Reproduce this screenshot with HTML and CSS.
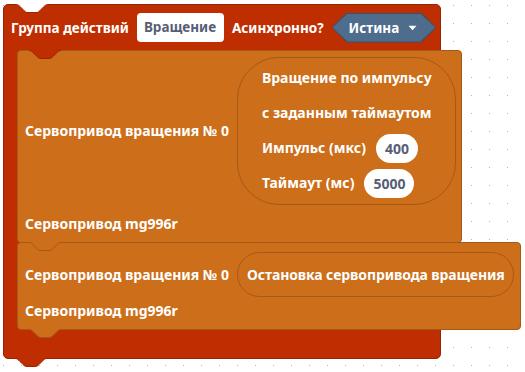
FILE: index.html
```html
<!DOCTYPE html>
<html lang="ru">
<head>
  <meta charset="UTF-8" />
  <title>Группа действий</title>
  <link rel="stylesheet" href="styles.css">
</head>
<body>
  <div class="workspace">
    <div class="c-block">
      <svg class="tab tab-cut" viewBox="0 0 32 10"><rect class="fill" width="32" height="1"/><path class="fill" d="M0 0.5 c2 0 3 1 4 2 l4 4 c1 1 2 2 4 2 h8 c2 0 3 -1 4 -2 l4 -4 c1 -1 2 -2 4 -2 Z"/><path class="edge" d="M0 0.5 c2 0 3 1 4 2 l4 4 c1 1 2 2 4 2 h8 c2 0 3 -1 4 -2 l4 -4 c1 -1 2 -2 4 -2"/></svg>

      <div class="c-head">
        <span class="label">Группа действий</span>
        <span class="field">Вращение</span>
        <span class="label">Асинхронно?</span>
        <span class="dropdown">Истина <svg class="arrow" viewBox="0 0 8 5"><path d="M0.5 0.5 H7.5 L4 4.5 Z"/></svg></span>
      </div>

      <div class="c-body">
        <div class="c-arm"></div>
        <div class="stack">
          <div class="block block-first">
            <svg class="tab tab-red" viewBox="0 0 32 10"><rect class="fill" width="32" height="1"/><path class="fill" d="M0 0.5 c2 0 3 1 4 2 l4 4 c1 1 2 2 4 2 h8 c2 0 3 -1 4 -2 l4 -4 c1 -1 2 -2 4 -2 Z"/><path class="edge" d="M0 0.5 c2 0 3 1 4 2 l4 4 c1 1 2 2 4 2 h8 c2 0 3 -1 4 -2 l4 -4 c1 -1 2 -2 4 -2"/></svg>
            <div class="row">
              <span class="label">Сервопривод вращения № 0</span>
              <div class="group">
                <div class="group-row"><span class="label">Вращение по импульсу</span></div>
                <div class="group-row"><span class="label">с заданным таймаутом</span></div>
                <div class="group-row"><span class="label">Импульс (мкс)</span><span class="number">400</span></div>
                <div class="group-row"><span class="label">Таймаут (мс)</span><span class="number">5000</span></div>
              </div>
            </div>
            <div class="row row-last"><span class="label">Сервопривод mg996r</span></div>
          </div>

          <div class="block block-second">
            <svg class="tab tab-orange" viewBox="0 0 32 10"><rect class="fill" width="32" height="1"/><path class="fill" d="M0 0.5 c2 0 3 1 4 2 l4 4 c1 1 2 2 4 2 h8 c2 0 3 -1 4 -2 l4 -4 c1 -1 2 -2 4 -2 Z"/><path class="edge" d="M0 0.5 c2 0 3 1 4 2 l4 4 c1 1 2 2 4 2 h8 c2 0 3 -1 4 -2 l4 -4 c1 -1 2 -2 4 -2"/></svg>
            <div class="row">
              <span class="label">Сервопривод вращения № 0</span>
              <span class="pill">Остановка сервопривода вращения</span>
            </div>
            <div class="row row-last"><span class="label">Сервопривод mg996r</span></div>
          </div>
        </div>
      </div>

      <div class="c-foot">
        <svg class="tab tab-orange" viewBox="0 0 32 10"><rect class="fill" width="32" height="1"/><path class="fill" d="M0 0.5 c2 0 3 1 4 2 l4 4 c1 1 2 2 4 2 h8 c2 0 3 -1 4 -2 l4 -4 c1 -1 2 -2 4 -2 Z"/><path class="edge" d="M0 0.5 c2 0 3 1 4 2 l4 4 c1 1 2 2 4 2 h8 c2 0 3 -1 4 -2 l4 -4 c1 -1 2 -2 4 -2"/></svg>
      </div>

      <svg class="tab tab-red tab-bottom" viewBox="0 0 32 10"><rect class="fill" width="32" height="1"/><path class="fill" d="M0 0.5 c2 0 3 1 4 2 l4 4 c1 1 2 2 4 2 h8 c2 0 3 -1 4 -2 l4 -4 c1 -1 2 -2 4 -2 Z"/><path class="edge" d="M0 0.5 c2 0 3 1 4 2 l4 4 c1 1 2 2 4 2 h8 c2 0 3 -1 4 -2 l4 -4 c1 -1 2 -2 4 -2"/></svg>
    </div>
  </div>
</body>
</html>
```

FILE: styles.css
```css
body { margin: 0; height: 372px; overflow: hidden; background-color: #fff; background-image: radial-gradient(circle at 0.5px 0.5px, #b4b4b4 0.8px, transparent 0.9px); background-size: 18px 18px; background-position: 3px 5px; font-family: "Noto Sans", sans-serif; font-size: 14px; font-weight: 700; color: #fff; }
.workspace { padding: 4px 0 0 3px; }

/* outer C block */
.c-block { position: relative; width: 438px; box-sizing: border-box; background: #bf2e00; border: 1px solid #992500; border-radius: 5px; }
.c-head { height: 45px; display: flex; align-items: center; gap: 8px; padding-left: 7px; font-size: 13.5px; }
.c-body { display: flex; }
.c-arm { width: 13px; flex: none; }
.stack { display: flex; flex-direction: column; align-items: flex-start; }
.c-foot { position: relative; height: 28px; }

.label { white-space: nowrap; line-height: 16px; }
.field { background: #fff; color: #575e75; height: 29px; line-height: 29px; padding: 0 8px 0 7px; border-radius: 4px; white-space: nowrap; }

.dropdown { position: relative; isolation: isolate; height: 30px; display: flex; align-items: center; gap: 9px; padding: 0 19px 0 17px; white-space: nowrap; }
.dropdown::before, .dropdown::after { content: ""; position: absolute; z-index: -1; clip-path: polygon(0 50%, 15px 0, calc(100% - 15px) 0, 100% 50%, calc(100% - 15px) 100%, 15px 100%); }
.dropdown::before { inset: 0; background: #39536e; }
.dropdown::after { inset: 1px; background: #4e6d8d; }
.arrow { width: 9px; height: 6px; fill: #fff; }

/* stacked statement blocks */
.block { position: relative; width: max-content; background: #cc6e1a; border: 1px solid #a65916; border-radius: 4px; }
.block-first { padding: 6px 5px 10px 7px; }
.block-second { margin-top: -1px; padding: 9px 6px 10px 7px; }
.row { display: flex; align-items: center; gap: 8px; }
.block-first .row-last { margin-top: 11px; }
.block-second .row-last { margin-top: 6px; }

.group { display: flex; flex-direction: column; gap: 5px; padding: 5px 23px 6px 24px; border: 1px solid #a65916; border-radius: 42px; }
.group-row { height: 30px; display: flex; align-items: center; gap: 10px; }
.number { background: #fff; color: #575e75; height: 29px; line-height: 29px; padding: 0 9px; border-radius: 15px; }

.pill { height: 43px; display: flex; align-items: center; padding: 0 8px 0 9px; border: 1px solid #a65916; border-radius: 23px; white-space: nowrap; letter-spacing: -0.1px; }

/* connection tabs */
.tab { position: absolute; width: 32px; height: 10px; z-index: 2; overflow: visible; }
.tab .edge { fill: none; stroke-width: 1; }
.tab-cut { top: -1px; left: 12px; }
.tab-cut .fill { fill: #fff; }
.tab-cut .edge { stroke: #992500; }
.tab-red .fill { fill: #bf2e00; }
.tab-red .edge { stroke: #992500; }
.tab-orange .fill { fill: #cc6e1a; }
.tab-orange .edge { stroke: #a65916; }
.block .tab { top: -1px; left: 11px; }
.c-foot .tab { top: -1px; left: 25px; }
.tab-bottom { top: 100%; left: 11px; }
```
